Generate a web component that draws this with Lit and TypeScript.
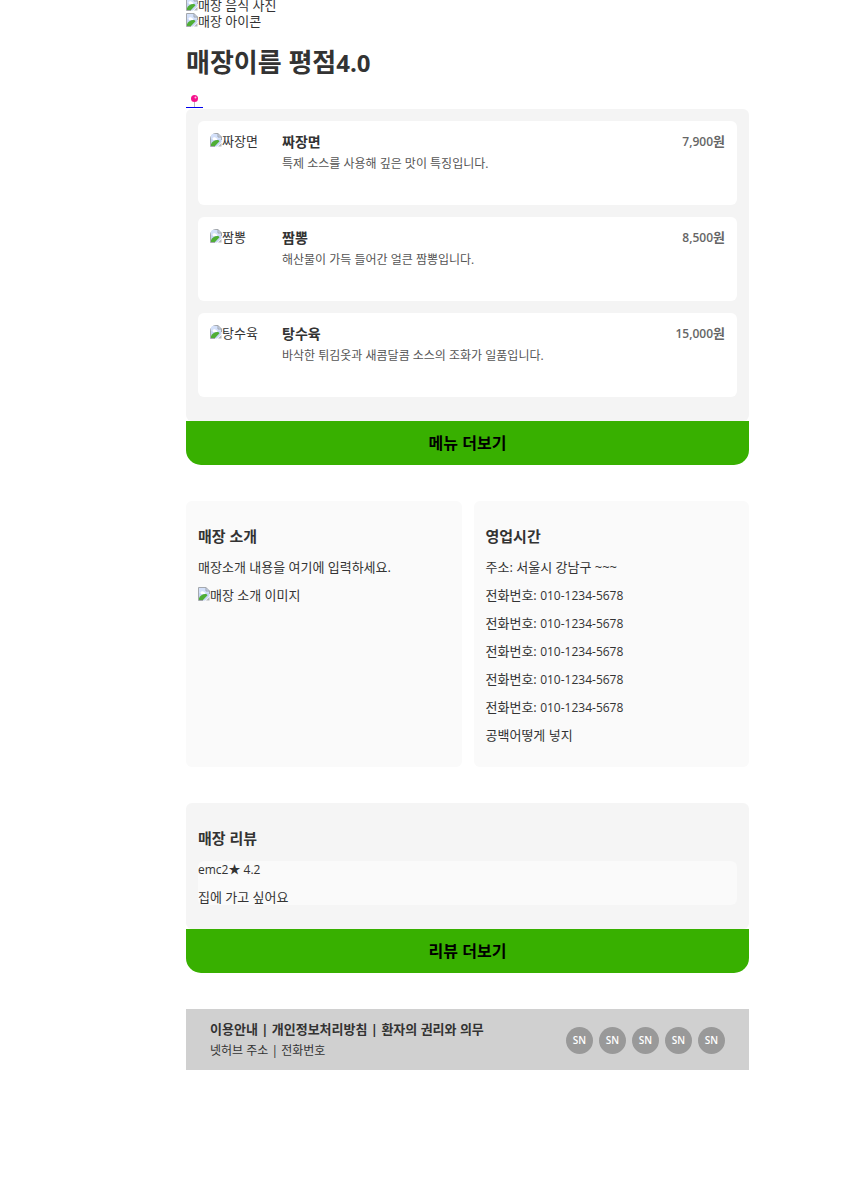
import { LitElement, html, svg, css } from "lit";
import { customElement, property } from "lit/decorators.js";

const menus = [
  { name: "짜장면", text: "특제 소스를 사용해 깊은 맛이 특징입니다.", price: "7,900" },
  { name: "짬뽕", text: "해산물이 가득 들어간 얼큰 짬뽕입니다.", price: "8,500" },
  { name: "탕수육", text: "바삭한 튀김옷과 새콤달콤 소스의 조화가 일품입니다.", price: "15,000" },
];
const phones = Array.from({ length: 5 }, () => "010-1234-5678");

@customElement("missing-image")
export class MissingImage extends LitElement {
  @property() label = "";

  static styles = css`
    :host {
      display: flex;
      align-items: flex-start;
      height: 16px;
      font-size: 13px;
      line-height: 16px;
      white-space: nowrap;
    }
    .icon {
      flex: none;
      display: block;
    }
  `;

  render() {
    return html`<svg class="icon" width="12" height="14" viewBox="0 0 12 14" aria-hidden="true">
        ${svg`<path d="M.5 13.500V.5H8L11.500 4v5L7 13.500z" fill="#c6d6f5"/>
        <path d="M1 1h6.500v3.500H11V6H1z" fill="#d3e0fa"/>
        <path d="M2.500 6c0-2 3-2.500 3.500-.8C7.500 5 7.800 6.500 7 7H3z" fill="#fff"/>
        <path d="M1 13v-2c1.500-2.500 4-4 6-4 1.500 0 2 .5 2.500 1.200L5 13z" fill="#4fae35"/>
        <path d="M.5 13.500V.5H8L11.500 4v3M.5 13.500H5M8 .5V4h3.500" fill="none" stroke="#a4a8ad"/>
        <path d="M11.500 10v3.500H8z" fill="#b3b7bb"/>`}
      </svg><span>${this.label}</span>`;
  }
}

@customElement("app-root")
export class AppRoot extends LitElement {
  static styles = css`
    :host {
      display: block;
      padding: 0 101px 122px 186px;
      color: #333;
      background: #fff;
      font-family: "Open Sans", "Noto Sans CJK KR", sans-serif;
      font-size: 13px;
      line-height: 16px;
    }
    h1, h2, h3, p { margin: 0; }
    .photos { margin-top: -3px; }
    h1 {
      margin-top: 16px;
      font-size: 26px;
      line-height: 34px;
    }
    .num {
      font-size: 12px;
      line-height: 1;
    }
    h1 .num { font-size: 24px; }
    .pin {
      display: block;
      width: 17px;
      height: 13px;
      margin: 15px 0 1px;
      border-bottom: 1px solid #00e;
    }
    .pin svg { display: block; }
    .box {
      padding: 12px 12px 24px;
      border-radius: 6px;
    }
    .menus {
      display: grid;
      gap: 12px;
      background: #f4f4f4;
    }
    .menu {
      display: flex;
      gap: 12px;
      padding: 12px;
      border-radius: 6px;
      background: #fff;
    }
    .thumb {
      flex: none;
      width: 60px;
      height: 60px;
      border-radius: 6px;
      overflow: hidden;
    }
    .about { flex: 1; }
    h3 {
      font-size: 14px;
      line-height: 18px;
    }
    .about p {
      margin-top: 5px;
      font-size: 12px;
      color: #555;
    }
    .price {
      font-weight: 600;
      color: #666;
    }
    .more {
      display: block;
      width: 100%;
      height: 44px;
      padding: 0;
      border: 0;
      border-radius: 0 0 15px 15px;
      background: #38b000;
      color: #000;
      font: inherit;
      font-size: 16px;
      font-weight: 700;
      cursor: pointer;
    }
    .columns {
      display: grid;
      grid-template-columns: 1fr 1fr;
      gap: 12px;
      margin: 36px 0;
    }
    .panel {
      padding: 24px 12px;
      border-radius: 6px;
      background: #fafafa;
    }
    h2 {
      font-size: 15px;
      line-height: 22px;
    }
    .lines {
      display: grid;
      gap: 12px;
      margin-top: 12px;
    }
    .reviews {
      padding-top: 24px;
      background: #f5f5f5;
    }
    .review {
      display: grid;
      gap: 10px;
      margin-top: 12px;
      border-radius: 6px;
      background: #fafafa;
    }
    .score {
      font-size: 12px;
      line-height: 18px;
    }
    footer {
      display: flex;
      justify-content: space-between;
      align-items: center;
      margin-top: 36px;
      padding: 12px 24px 11px;
      background: #d0d0d0;
    }
    .links { font-weight: 700; }
    .contact {
      margin-top: 6px;
      font-size: 12px;
    }
    a { color: inherit; text-decoration: none; }
    .social {
      display: flex;
      gap: 6px;
    }
    .social a {
      width: 27px;
      border-radius: 50%;
      background: #999;
      color: #fff;
      font-size: 10px;
      font-weight: 600;
      line-height: 27px;
      text-align: center;
    }
  `;

  render() {
    return html`
      <div class="photos">
        <missing-image label="매장 음식 사진"></missing-image>
        <missing-image label="매장 아이콘"></missing-image>
      </div>
      <h1>매장이름 평점<span class="num">4.0</span></h1>
      <a class="pin" href="#" aria-label="위치">
        <svg width="17" height="13" viewBox="0 0 17 13">
          <path d="M8.500 6v7" stroke="#bbb" />
          <circle cx="8.500" cy="4.500" r="3.500" fill="#f5128c" />
          <circle cx="9.500" cy="3.500" r="1" fill="#ffc0df" />
        </svg>
      </a>
      <section>
        <div class="box menus">
          ${menus.map((m) => html`
            <article class="menu">
              <missing-image class="thumb" label=${m.name}></missing-image>
              <div class="about"><h3>${m.name}</h3><p>${m.text}</p></div>
              <div class="price"><span class="num">${m.price}</span>원</div>
            </article>`)}
        </div>
        <button class="more">메뉴 더보기</button>
      </section>
      <div class="columns">
        <section class="panel">
          <h2>매장 소개</h2>
          <div class="lines">
            <p>매장소개 내용을 여기에 입력하세요.</p>
            <missing-image label="매장 소개 이미지"></missing-image>
          </div>
        </section>
        <section class="panel">
          <h2>영업시간</h2>
          <div class="lines">
            <p>주소: 서울시 강남구 ~~~</p>
            ${phones.map((p) => html`<p>전화번호: <span class="num">${p}</span></p>`)}
            <p>공백어떻게 넣지</p>
          </div>
        </section>
      </div>
      <section>
        <div class="box reviews">
          <h2>매장 리뷰</h2>
          <article class="review">
            <p class="score">emc2★ 4.2</p>
            <p>집에 가고 싶어요</p>
          </article>
        </div>
        <button class="more">리뷰 더보기</button>
      </section>
      <footer>
        <div>
          <p class="links"><a href="#">이용안내</a> | <a href="#">개인정보처리방침</a> | <a href="#">환자의 권리와 의무</a></p>
          <p class="contact">넷허브 주소 | 전화번호</p>
        </div>
        <nav class="social">${[1, 2, 3, 4, 5].map(() => html`<a href="#">SN</a>`)}</nav>
      </footer>
    `;
  }
}
